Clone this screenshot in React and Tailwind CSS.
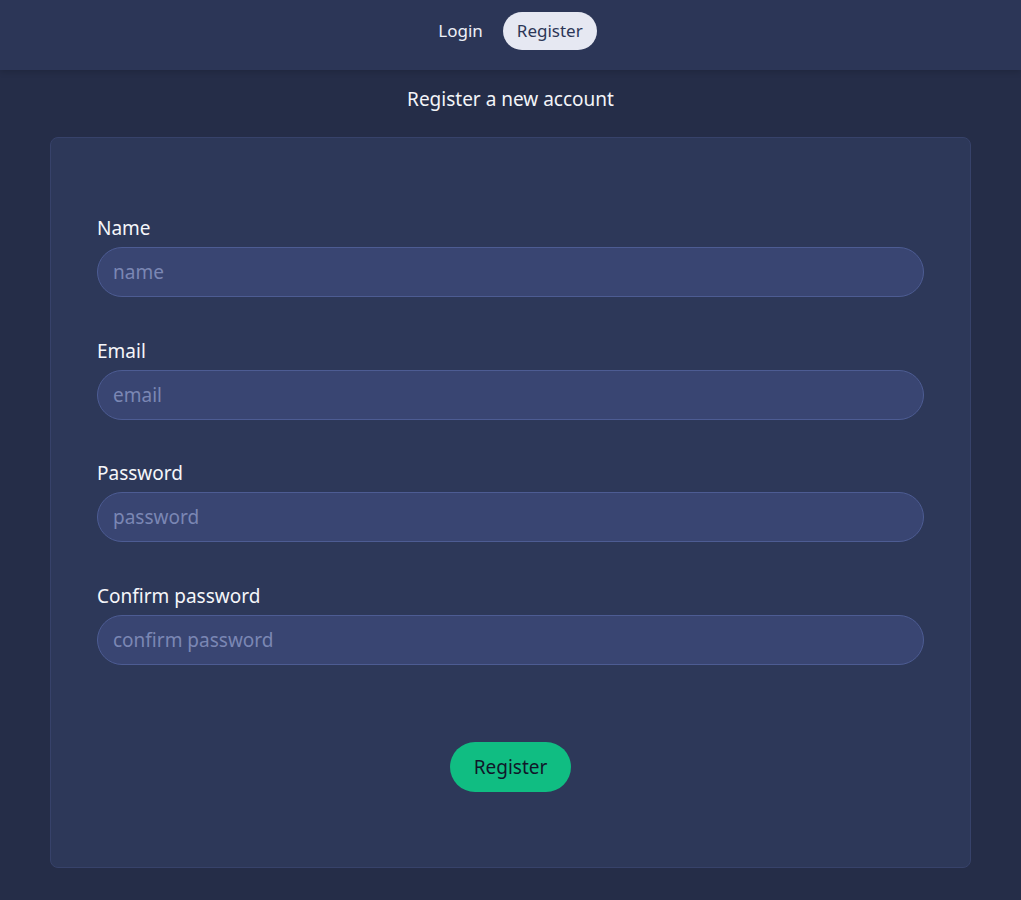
import React, { useState } from 'react';

const fields = [
  { id: 'name', label: 'Name', type: 'text', placeholder: 'name' },
  { id: 'email', label: 'Email', type: 'email', placeholder: 'email' },
  { id: 'password', label: 'Password', type: 'password', placeholder: 'password' },
  { id: 'confirm', label: 'Confirm password', type: 'password', placeholder: 'confirm password' },
];

const App = () => {
  const [tab, setTab] = useState('register');
  const [values, setValues] = useState({});

  const onChange = (id) => (e) => setValues({ ...values, [id]: e.target.value });

  return (
    <div className="min-h-screen bg-[#252d48] text-white font-['Noto_Sans',sans-serif]">
      <header className="h-[70px] bg-[#2c3657] shadow-[0_2px_6px_rgba(0,0,0,0.15)] flex items-start pt-[12px] justify-center gap-[6px]">
        <button
          onClick={() => setTab('login')}
          className={`h-[38px] px-[14px] rounded-full text-[17px] ${tab === 'login' ? 'bg-[#e6e8f2] text-[#2c3657]' : 'text-[#eef0f7]'}`}
        >
          Login
        </button>
        <button
          onClick={() => setTab('register')}
          className={`h-[38px] px-[14px] rounded-full text-[17px] ${tab === 'register' ? 'bg-[#e6e8f2] text-[#2c3657]' : 'text-[#eef0f7]'}`}
        >
          Register
        </button>
      </header>

      <main className="px-[50px] pb-[32px]">
        <h1 className="text-center text-[19px] leading-[24px] pt-[17px] pb-[26px] text-[#f3f4f8]">
          Register a new account
        </h1>

        <form
          onSubmit={(e) => e.preventDefault()}
          className="bg-[#2d3859] border border-[#37426a] rounded-lg px-[46px] pt-[78px] pb-[75px]"
        >
          {fields.map((f, i) => (
            <div key={f.id} className={i > 0 ? 'mt-[41.67px]' : ''}>
              <label htmlFor={f.id} className="block text-[19px] leading-[24px] mb-[7px] text-[#f5f6fa]">
                {f.label}
              </label>
              <input
                id={f.id}
                type={f.type}
                placeholder={f.placeholder}
                value={values[f.id] || ''}
                onChange={onChange(f.id)}
                className="w-full h-[50px] rounded-full bg-[#394572] border border-[#4d5c93] px-[15px] text-[19px] text-white placeholder:text-[#7b87b4] outline-none"
              />
            </div>
          ))}

          <div className="flex justify-center mt-[77px]">
            <button
              type="submit"
              className="h-[50px] px-[24px] rounded-full bg-[#10bd82] text-[#10172a] text-[19px]"
            >
              Register
            </button>
          </div>
        </form>
      </main>
    </div>
  );
};

export default App;
